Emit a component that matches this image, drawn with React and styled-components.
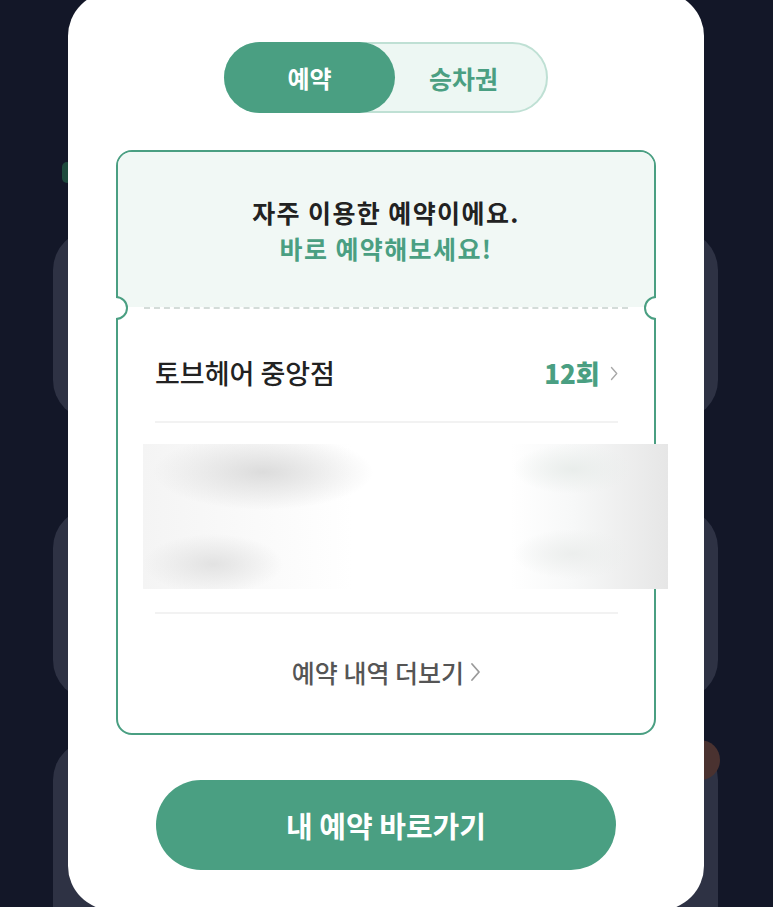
import React from "react";
import styled, {createGlobalStyle} from "styled-components";

const green = "#4a9f82";

//page basics
const GlobalStyle = createGlobalStyle`
    html, body {
        margin: 0;
        padding: 0;
        background: #131728;
        overflow: hidden;
    }
    body {
        font-family: "Noto Sans CJK KR", "Noto Sans", sans-serif;
    }
`;

//dimmed page that sits behind the modal
const Screen = styled.div`
    position: relative;
    width: 773px;
    height: 907px;
    overflow: hidden;
    background: #131728;
`;

const BackList = styled.div`
    display: flex;
    flex-direction: column;
    padding: 162px 55px 0 53px;
`;

const BackChip = styled.div`
    width: 10px;
    height: 21px;
    margin-left: 9px;
    border-radius: 5px;
    background: #1e4a3d;
`;

const BackCard = styled.div`
    position: relative;
    height: ${(p) => p.h}px;
    margin-top: ${(p) => p.gap}px;
    border-radius: 40px;
    background: #2e3244;
`;

const BackBadge = styled.div`
    position: absolute;
    top: 0;
    right: -2px;
    width: 40px;
    height: 40px;
    border-radius: 50%;
    background: #4a3230;
`;

//white sheet over the page
const Modal = styled.div`
    position: absolute;
    left: 68px;
    top: -8px;
    width: 636px;
    height: 918px;
    border-radius: 44px;
    background: #ffffff;
    display: flex;
    flex-direction: column;
    align-items: center;
    padding-top: 50px;
    box-sizing: border-box;
`;

//segmented toggle
const Toggle = styled.div`
    display: flex;
    width: 324px;
    height: 71px;
    box-sizing: border-box;
    border: 2px solid #bfe0d4;
    border-radius: 36px;
    background: #edf7f3;
`;

const ToggleItem = styled.div`
    display: flex;
    align-items: center;
    justify-content: center;
    width: ${(p) => (p.active ? "171px" : "auto")};
    flex: ${(p) => (p.active ? "none" : "1")};
    margin: ${(p) => (p.active ? "-2px 0 -2px -2px" : "0")};
    padding-right: ${(p) => (p.active ? "0" : "14px")};
    border-radius: 36px;
    background: ${(p) => (p.active ? green : "transparent")};
    color: ${(p) => (p.active ? "#ffffff" : green)};
    font-size: ${(p) => (p.active ? "24px" : "25px")};
    font-weight: 700;
`;

//ticket shaped card
const Ticket = styled.div`
    position: relative;
    width: 540px;
    margin-top: 37px;
    box-sizing: border-box;
    border: 2px solid ${green};
    border-radius: 16px;
    background: #ffffff;
`;

const TicketHead = styled.div`
    display: flex;
    flex-direction: column;
    align-items: center;
    justify-content: center;
    height: 155px;
    border-radius: 14px 14px 0 0;
    background: #f1f8f5;
    font-size: 25px;
    font-weight: 700;
    line-height: 36px;
    letter-spacing: 1.4px;
    color: #222222;
`;

const HeadLine = styled.span`
    display: block;
    color: ${(p) => (p.accent ? green : "#222222")};
`;

const Perforation = styled.div`
    margin: 0 26px;
    border-top: 2px dashed #d4dcd9;
`;

const Notch = styled.div`
    position: absolute;
    top: 144px;
    ${(p) => (p.side === "left" ? "left: -2px;" : "right: -2px;")}
    width: 12px;
    height: 24px;
    overflow: hidden;
    &::after {
        content: "";
        position: absolute;
        top: 0;
        ${(p) => (p.side === "left" ? "left: -12px;" : "right: -12px;")}
        width: 20px;
        height: 20px;
        border-radius: 50%;
        border: 2px solid ${green};
        background: #ffffff;
    }
`;

const TicketBody = styled.div`
    display: flex;
    flex-direction: column;
    padding: 0 36px 0 37px;
`;

const PlaceRow = styled.div`
    display: flex;
    align-items: center;
    justify-content: space-between;
    padding: 47px 0 31px;
    line-height: 34px;
`;

const PlaceName = styled.span`
    font-size: 27px;
    font-weight: 500;
    color: #222222;
`;

const CountLink = styled.span`
    display: flex;
    align-items: center;
    gap: 10px;
    font-size: 26px;
    font-weight: 800;
    color: ${green};
`;

const Line = styled.div`
    height: 2px;
    background: #f2f2f2;
`;

//blurred placeholder for a hidden row
const Blurred = styled.div`
    height: 145px;
    margin: 21px -50px 23px -12px;
    background:
        radial-gradient(ellipse 110px 38px at 120px 28px, #dcdcdc 0%, rgba(230,230,230,0) 100%),
        radial-gradient(ellipse 70px 30px at 70px 120px, #e2e2e2 0%, rgba(230,230,230,0) 100%),
        radial-gradient(ellipse 60px 25px at 430px 25px, #e9edeb 0%, rgba(235,235,235,0) 100%),
        radial-gradient(ellipse 60px 25px at 430px 110px, #eceeed 0%, rgba(235,235,235,0) 100%),
        linear-gradient(90deg, #f4f4f4 0%, #ffffff 40%, #ffffff 70%, #f7f8f8 82%, #e6e6e6 100%);
`;

const MoreLink = styled.div`
    display: flex;
    align-items: center;
    justify-content: center;
    gap: 6px;
    padding: 41px 0 44px;
    line-height: 34px;
    font-size: 25px;
    font-weight: 500;
    color: #555555;
`;

const MainButton = styled.button`
    width: 460px;
    height: 90px;
    margin-top: 45px;
    border: none;
    border-radius: 45px;
    background: ${green};
    color: #ffffff;
    font-family: inherit;
    font-size: 29px;
    font-weight: 700;
`;

const Chevron = ({size, color}) => (
    <svg width={size * 0.55} height={size} viewBox="0 0 11 20" fill="none">
        <path d="M2 2l7 8-7 8" stroke={color} strokeWidth="1.8" strokeLinecap="round" strokeLinejoin="round" />
    </svg>
);

const App = () => {
    return (
        <Screen>
            <GlobalStyle />
            <BackList>
                <BackChip />
                <BackCard h={190} gap={47} />
                <BackCard h={192} gap={88} />
                <BackCard h={220} gap={40}>
                    <BackBadge />
                </BackCard>
            </BackList>
            <Modal>
                <Toggle>
                    <ToggleItem active>예약</ToggleItem>
                    <ToggleItem>승차권</ToggleItem>
                </Toggle>
                <Ticket>
                    <TicketHead>
                        <HeadLine>자주 이용한 예약이에요.</HeadLine>
                        <HeadLine accent>바로 예약해보세요!</HeadLine>
                    </TicketHead>
                    <Perforation />
                    <Notch side="left" />
                    <Notch side="right" />
                    <TicketBody>
                        <PlaceRow>
                            <PlaceName>토브헤어 중앙점</PlaceName>
                            <CountLink>
                                12회
                                <Chevron size={15} color="#a8a8a8" />
                            </CountLink>
                        </PlaceRow>
                        <Line />
                        <Blurred />
                        <Line />
                        <MoreLink>
                            예약 내역 더보기
                            <Chevron size={20} color="#9a9a9a" />
                        </MoreLink>
                    </TicketBody>
                </Ticket>
                <MainButton>내 예약 바로가기</MainButton>
            </Modal>
        </Screen>
    );
};

export default App;
